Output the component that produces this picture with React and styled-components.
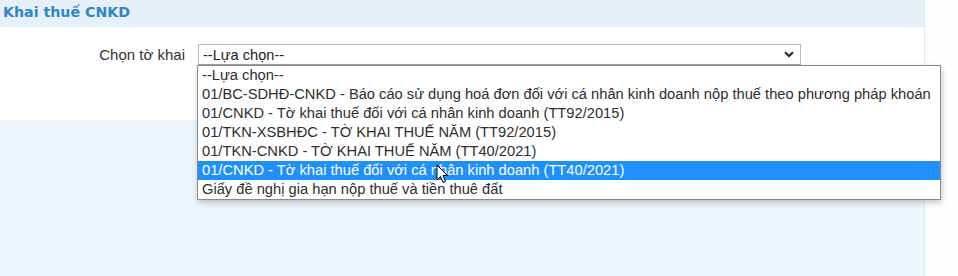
import React from "react";
import styled, { createGlobalStyle } from "styled-components";

const GlobalStyle = createGlobalStyle`
  html, body {
    margin: 0;
    padding: 0;
    background: #ffffff;
  }
  * {
    box-sizing: border-box;
  }
`;

const options = [
  "--Lựa chọn--",
  "01/BC-SDHĐ-CNKD - Báo cáo sử dụng hoá đơn đối với cá nhân kinh doanh nộp thuế theo phương pháp khoán",
  "01/CNKD - Tờ khai thuế đối với cá nhân kinh doanh (TT92/2015)",
  "01/TKN-XSBHĐC - TỜ KHAI THUẾ NĂM (TT92/2015)",
  "01/TKN-CNKD - TỜ KHAI THUẾ NĂM (TT40/2021)",
  "01/CNKD - Tờ khai thuế đối với cá nhân kinh doanh (TT40/2021)",
  "Giấy đề nghị gia hạn nộp thuế và tiền thuê đất",
];

const Page = styled.div`
  display: flex;
  width: 958px;
  height: 276px;
  overflow: hidden;
  font-family: "Liberation Sans", Arial, sans-serif;
`;

const Panel = styled.div`
  display: flex;
  flex-direction: column;
  width: 925px;
  border-right: 1px solid #dce8f3;
`;

const Header = styled.div`
  height: 27px;
  padding: 4px 3px 0;
  background: #e7f0f9;
  border-bottom: 1px solid #dde9f4;
`;

const Title = styled.h2`
  margin: 0;
  font-family: "DejaVu Sans", Verdana, sans-serif;
  font-size: 14.2px;
  font-weight: bold;
  color: #2f86c3;
`;

const FormArea = styled.div`
  height: 93px;
  padding-top: 17px;
  background: #ffffff;
`;

const Rest = styled.div`
  flex: 1;
  background: #eef6fd;
`;

const FormRow = styled.div`
  display: flex;
  align-items: center;
`;

const Label = styled.label`
  width: 185px;
  margin-right: 13px;
  text-align: right;
  font-size: 15px;
  color: #333333;
`;

const SelectWrap = styled.div`
  position: relative;
  width: 603px;
`;

const SelectBox = styled.div`
  display: flex;
  align-items: center;
  justify-content: space-between;
  height: 21px;
  padding: 0 6px 0 4px;
  border: 1px solid #b9b9b9;
  border-bottom-color: #a0a0a0;
  background: #ffffff;
  font-size: 14.6px;
  color: #222222;
`;

const List = styled.ul`
  position: absolute;
  top: 21px;
  left: -1px;
  width: 744px;
  margin: 0;
  padding: 0;
  list-style: none;
  background: #ffffff;
  border: 1px solid #8a8a8a;
  box-shadow: 1px 3px 6px rgba(0, 0, 0, 0.22);
  z-index: 2;
`;

const Option = styled.li`
  height: 19px;
  line-height: 19px;
  padding-left: 4px;
  font-size: 14.7px;
  white-space: nowrap;
  overflow: hidden;
  color: ${(p) => (p.$active ? "#ffffff" : "#2e2e2e")};
  background: ${(p) => (p.$active ? "#1e90ff" : "transparent")};
`;

const Cursor = styled.svg`
  position: absolute;
  left: 238px;
  top: 120px;
  z-index: 3;
`;

const RightStrip = styled.div`
  flex: 1;
  background: #fdfeff;
`;

const Chevron = () => (
  <svg width="10" height="7" viewBox="0 0 10 7">
    <path d="M1 1.2 L5 5 L9 1.2" fill="none" stroke="#222" strokeWidth="2" />
  </svg>
);

export default function App() {
  return (
    <>
      <GlobalStyle />
      <Page>
        <Panel>
          <Header>
            <Title>Khai thuế CNKD</Title>
          </Header>
          <FormArea>
            <FormRow>
              <Label>Chọn tờ khai</Label>
              <SelectWrap>
                <SelectBox>
                  <span>--Lựa chọn--</span>
                  <Chevron />
                </SelectBox>
                <List>
                  {options.map((o, i) => (
                    <Option key={i} $active={i === 5}>
                      {o}
                    </Option>
                  ))}
                </List>
                <Cursor width="13" height="20" viewBox="0 0 13 20">
                  <path
                    d="M1 1 L1 16 L4.5 12.5 L7 18.5 L9.5 17.5 L7 11.5 L11.5 11.5 Z"
                    fill="#ffffff"
                    stroke="#000000"
                    strokeWidth="1"
                    strokeLinejoin="round"
                  />
                </Cursor>
              </SelectWrap>
            </FormRow>
          </FormArea>
          <Rest />
        </Panel>
        <RightStrip />
      </Page>
    </>
  );
}
